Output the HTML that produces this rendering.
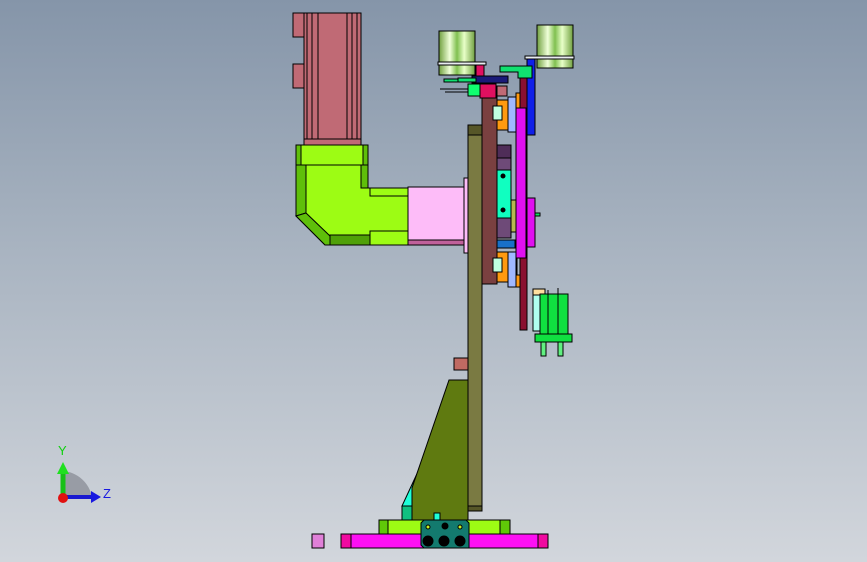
<!DOCTYPE html>
<html><head><meta charset="utf-8"><style>
html,body{margin:0;padding:0;width:867px;height:562px;overflow:hidden}
body{background:linear-gradient(#8595a9 0%,#a9b4c1 45%,#d2d6dc 100%);font-family:"Liberation Sans",sans-serif}
svg{position:absolute;left:0;top:0}
</style></head><body>
<svg width="867" height="562" viewBox="0 0 867 562" stroke="#000" stroke-width="1">
<!-- motor -->
<rect x="293" y="13" width="12" height="24" fill="#c06a75"/>
<rect x="293" y="64" width="12" height="24" fill="#c06a75"/>
<rect x="304" y="13" width="57" height="132" fill="#c06a75"/>
<line x1="307" y1="13" x2="307" y2="139"/><line x1="312" y1="13" x2="312" y2="139"/><line x1="318" y1="13" x2="318" y2="139"/>
<line x1="347" y1="13" x2="347" y2="139"/><line x1="352" y1="13" x2="352" y2="139"/><line x1="357" y1="13" x2="357" y2="139"/>
<line x1="304" y1="139" x2="361" y2="139"/>
<!-- gearbox -->
<path d="M296 145H368V188H408V245H325L296 216Z" fill="#9dfc14"/>
<rect x="296" y="145" width="72" height="20" fill="#9dfc14"/>
<rect x="296" y="145" width="5" height="20" fill="#5fbf0a"/><rect x="363" y="145" width="5" height="20" fill="#5fbf0a"/>
<path d="M296 165H306V213L296 216Z" fill="#5fbf0a"/>
<path d="M296 216L306 213L330 236V245H325Z" fill="#5fbf0a"/>
<rect x="330" y="235" width="40" height="10" fill="#4fa008"/>
<path d="M361 165H368V188H361Z" fill="#5fbf0a"/>
<rect x="370" y="188" width="38" height="8" fill="#9dfc14"/>
<rect x="370" y="231" width="38" height="14" fill="#9dfc14"/>
<rect x="408" y="187" width="57" height="58" fill="#fdbcf8"/>
<rect x="408" y="240" width="57" height="5" fill="#c0609a"/>
<rect x="464" y="178" width="5" height="75" fill="#fdbcf8"/>
<!-- column -->
<rect x="468" y="125" width="14" height="386" fill="#7a7a42"/>
<rect x="468" y="125" width="14" height="10" fill="#565628"/>
<rect x="468" y="506" width="14" height="5" fill="#565628"/>
<!-- gusset -->
<path d="M402 506L428 450L412 488V506Z" fill="#1fffd8"/>
<path d="M449 380H468V520H412V488Z" fill="#5f7a10"/>
<rect x="402" y="506" width="10" height="14" fill="#10c080"/>
<rect x="454" y="358" width="14" height="12" fill="#c06a62"/>
<!-- base -->
<rect x="379" y="520" width="131" height="14" fill="#9dfc14"/>
<rect x="379" y="520" width="9" height="14" fill="#60c808"/><rect x="500" y="520" width="10" height="14" fill="#60c808"/>
<rect x="341" y="534" width="207" height="14" fill="#fd10f4"/>
<rect x="341" y="534" width="10" height="14" fill="#f00aa0"/><rect x="538" y="534" width="10" height="14" fill="#f00aa0"/>
<path d="M424 520H466L469 523V548H424L421 545V523Z" fill="#137a6e"/>
<rect x="434" y="513" width="6" height="7" fill="#1fffd8"/>
<circle cx="428" cy="527" r="2" fill="#c8f020"/><circle cx="445" cy="526" r="3" fill="#000"/><circle cx="460" cy="527" r="2" fill="#c8f020"/>
<circle cx="428" cy="541" r="5" fill="#000"/><circle cx="444" cy="541" r="5" fill="#000"/><circle cx="460" cy="541" r="5" fill="#000"/>
<rect x="312" y="534" width="12" height="14" fill="#e080d8"/>
<!-- tooling plate -->
<rect x="482" y="97" width="15" height="187" fill="#7a4040"/>
<rect x="497" y="145" width="14" height="13" fill="#4f2d58"/>
<rect x="497" y="158" width="14" height="12" fill="#6e4a78"/>
<rect x="497" y="170" width="14" height="48" fill="#10ffc0"/>
<circle cx="503" cy="176" r="2" fill="#000"/><circle cx="503" cy="210" r="2" fill="#000"/>
<rect x="497" y="218" width="14" height="20" fill="#6e4a78"/>
<rect x="511" y="200" width="7" height="32" fill="#b8b850"/>
<rect x="497" y="240" width="18" height="8" fill="#1870c8"/>
<rect x="497" y="100" width="20" height="30" fill="#ff9a10"/>
<rect x="497" y="252" width="20" height="30" fill="#ff9a10"/>
<rect x="493" y="106" width="9" height="14" fill="#c0ffe0"/><rect x="493" y="258" width="9" height="14" fill="#c0ffe0"/>
<rect x="508" y="97" width="8" height="35" fill="#a0b8ff"/><rect x="508" y="252" width="8" height="35" fill="#a0b8ff"/>
<rect x="516" y="93" width="10" height="15" fill="#ff9a10"/><rect x="516" y="275" width="10" height="12" fill="#ff9a10"/>
<rect x="520" y="77" width="7" height="253" fill="#8a1030"/>
<rect x="516" y="108" width="10" height="150" fill="#e010f0"/>
<rect x="527" y="58" width="8" height="77" fill="#1020e8"/>
<rect x="527" y="198" width="8" height="49" fill="#e010f0"/>
<rect x="535" y="213" width="5" height="3" fill="#10e060"/>
<path d="M500 66H532V78H518V72H500Z" fill="#10e070"/>
<!-- top small parts -->
<rect x="476" y="63" width="8" height="15" fill="#e01060"/>
<rect x="472" y="76" width="36" height="7" fill="#1a1a78"/>
<rect x="458" y="78" width="18" height="4" fill="#10e070"/>
<rect x="444" y="79" width="14" height="3" fill="#10e070"/>
<rect x="468" y="84" width="12" height="12" fill="#10ff70"/>
<rect x="480" y="84" width="16" height="14" fill="#e01060"/>
<line x1="440" y1="89" x2="468" y2="89"/><line x1="445" y1="92" x2="468" y2="92"/>
<rect x="497" y="86" width="10" height="10" fill="#c06a75"/>
<!-- cylinders -->
<defs><linearGradient id="cg" x1="0" x2="1"><stop offset="0" stop-color="#70a040"/><stop offset=".3" stop-color="#f0ffd8"/><stop offset=".5" stop-color="#80c050"/><stop offset=".7" stop-color="#e8ffc8"/><stop offset="1" stop-color="#70a040"/></linearGradient></defs>
<rect x="439" y="31" width="36" height="44" fill="url(#cg)"/>
<rect x="438" y="62" width="48" height="3" fill="#e8ecf0"/>
<rect x="537" y="25" width="36" height="43" fill="url(#cg)"/>
<rect x="525" y="56" width="49" height="3" fill="#e8ecf0"/>
<!-- right bottom assembly -->
<rect x="533" y="289" width="12" height="42" fill="#b0fff0"/>
<rect x="533" y="289" width="12" height="6" fill="#ffe0a0"/>
<rect x="540" y="294" width="28" height="41" fill="#10e040"/>
<line x1="548" y1="290" x2="548" y2="335"/><line x1="558" y1="288" x2="558" y2="335"/>
<rect x="535" y="334" width="37" height="8" fill="#10e040"/>
<rect x="541" y="342" width="5" height="14" fill="#60f080"/><rect x="558" y="342" width="5" height="14" fill="#60f080"/>
</svg>
<!-- axis triad -->
<svg width="867" height="562" style="pointer-events:none">
<path d="M63 497V471A32 32 0 0 1 92 497Z" fill="#8c9098" opacity=".8"/>
<line x1="63" y1="498" x2="63" y2="472" stroke="#18c018" stroke-width="5"/>
<path d="M57 474L63 462L69 474Z" fill="#20e020"/>
<line x1="63" y1="497" x2="92" y2="497" stroke="#1818d0" stroke-width="4"/>
<path d="M91 491L101 497L91 503Z" fill="#1818e0"/>
<circle cx="63" cy="498" r="5" fill="#e01010"/>
<text x="58" y="455" font-size="13" fill="#10d010" font-family="Liberation Sans,sans-serif">Y</text>
<text x="103" y="498" font-size="13" fill="#1818e0" font-family="Liberation Sans,sans-serif">Z</text>
</svg>
</body></html>
